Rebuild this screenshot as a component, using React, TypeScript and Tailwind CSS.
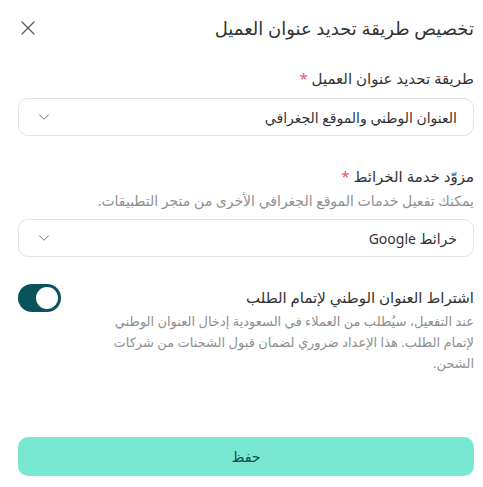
import { ChevronDown } from 'lucide-react';

export default function App() {
    return (
        <div dir="rtl" className="w-[483px] h-[487px] bg-white pr-[9px] pl-[18px] pb-[11px] flex flex-col font-['Noto_Sans','DejaVu_Sans',sans-serif] text-[#333]">
            <div className="h-[56px] flex items-center justify-between">
                <h2 className="text-[18px] leading-6">تخصيص طريقة تحديد عنوان العميل</h2>
                <button className="ml-[3px] text-[#555]">
                    <svg width="14" height="14" viewBox="0 0 14 14" fill="none" stroke="currentColor" strokeWidth="1.2" strokeLinecap="round">
                        <path d="M1 1L13 13M13 1L1 13" />
                    </svg>
                </button>
            </div>

            <label className="mt-[12px] text-[15px] leading-5">
                طريقة تحديد عنوان العميل <span className="text-[#f0506e]">*</span>
            </label>
            <div className="mt-[10px] h-[38px] rounded-[10px] border border-[#e2e2e2] px-4 flex items-center justify-between text-[14px]">
                <span>العنوان الوطني والموقع الجغرافي</span>
                <ChevronDown size={18} strokeWidth={1.1} className="text-[#555]" />
            </div>

            <label className="mt-[30px] text-[15px] leading-5">
                مزوّد خدمة الخرائط <span className="text-[#f0506e]">*</span>
            </label>
            <p className="mt-[5px] text-[14px] leading-5 text-[#8f8f8f]">يمكنك تفعيل خدمات الموقع الجغرافي الأخرى من متجر التطبيقات.</p>
            <div className="mt-[8px] h-[38px] rounded-[10px] border border-[#e2e2e2] px-4 flex items-center justify-between text-[14px]">
                <span>خرائط Google</span>
                <ChevronDown size={18} strokeWidth={1.1} className="text-[#555]" />
            </div>

            <div className="mt-[30px] flex items-start gap-5">
                <div className="flex-1">
                    <div className="text-[15px] font-medium leading-5">اشتراط العنوان الوطني لإتمام الطلب</div>
                    <p className="mt-[4px] text-[13px] leading-[21px] text-[#8f8f8f]">
                        عند التفعيل، سيُطلب من العملاء في السعودية إدخال العنوان الوطني لإتمام الطلب. هذا الإعداد ضروري لضمان قبول الشحنات من شركات الشحن.
                    </p>
                </div>
                <button className="mt-[-3px] w-[43px] h-[28px] rounded-full bg-[#0b535c] p-[3px] flex justify-start">
                    <span className="w-[22px] h-[22px] rounded-full bg-white" />
                </button>
            </div>

            <button className="mt-auto h-[39px] rounded-[10px] bg-[#79e8d0] text-[14px] text-[#0d4a52]">حفظ</button>
        </div>
    );
}
